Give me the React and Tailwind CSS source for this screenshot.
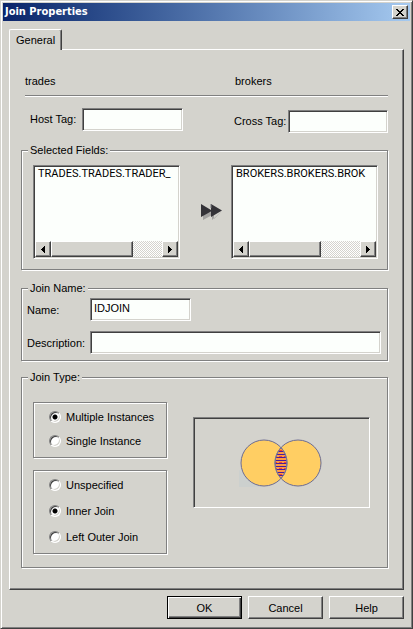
import { useState } from 'react'

const sunken =
  'border border-t-[#808080] border-l-[#808080] border-b-white border-r-white shadow-[inset_1px_1px_0_#404040,inset_-1px_-1px_0_#d4d3cd]'
const raised =
  'border border-t-white border-l-white border-b-[#404040] border-r-[#404040] bg-[#d4d3cd] shadow-[inset_-1px_-1px_0_#808080]'
const etched = 'min-w-0 border border-[#808080] shadow-[1px_1px_0_#fff,inset_1px_1px_0_#fff]'

function TextBox({ id, className = '', ...props }) {
  return (
    <input
      id={id}
      type="text"
      className={`h-[23px] min-w-0 bg-[#fcfffc] px-[3px] pb-1 outline-none ${sunken} ${className}`}
      {...props}
    />
  )
}

function Group({ title, className, children }) {
  return (
    <fieldset className={etched}>
      <legend className="ml-1.5 bg-[#d4d3cd] px-0.5 leading-[13px]">{title}</legend>
      <div className={className}>{children}</div>
    </fieldset>
  )
}

function ScrollButton({ label, d }) {
  return (
    <button type="button" aria-label={label} className={`flex size-4 shrink-0 items-center justify-center ${raised}`}>
      <svg width="4" height="7" viewBox="0 0 4 7" shapeRendering="crispEdges">
        <path d={d} />
      </svg>
    </button>
  )
}

function FieldList({ label, item, thumb }) {
  return (
    <div className={`flex h-[94px] min-w-0 flex-1 flex-col bg-[#fcfffc] p-px ${sunken}`}>
      <ul
        aria-label={label}
        className="flex-1 overflow-hidden pl-[3px] font-[Roboto,'Liberation_Sans',sans-serif] leading-[14px] whitespace-nowrap"
      >
        <li>{item}</li>
      </ul>
      <div className="flex h-4 bg-[repeating-conic-gradient(#fff_0_25%,#d4d3cd_0_50%)] bg-[length:2px_2px]">
        <ScrollButton label={`Scroll ${label} left`} d="M4 0V7H3V6H2V5H1V4H0V3H1V2H2V1H3V0Z" />
        <div className="min-w-0 flex-1">
          <div className={`h-4 ${raised}`} style={{ width: `${thumb}%` }} />
        </div>
        <ScrollButton label={`Scroll ${label} right`} d="M0 0V7H1V6H2V5H3V4H4V3H3V2H2V1H1V0Z" />
      </div>
    </div>
  )
}

function RadioGroup({ name, label, options, value, onChange, className }) {
  return (
    <fieldset aria-label={label} className={etched}>
      <div className={`flex flex-col pt-1.5 pb-2 pl-[15px] ${className}`}>
        {options.map((o) => (
          <label key={o} className="flex h-4 items-center gap-[5px]">
            <input
              type="radio"
              name={name}
              checked={value === o}
              onChange={() => onChange(o)}
              className="size-3 shrink-0 appearance-none rounded-full border border-t-[#808080] border-r-white border-b-white border-l-[#808080] bg-white shadow-[inset_1px_1px_0_#404040,inset_-1px_-1px_0_#d4d3cd] checked:bg-[radial-gradient(circle,#000_2px,#fff_3px)]"
            />
            {o}
          </label>
        ))}
      </div>
    </fieldset>
  )
}

function DoubleArrow() {
  return (
    <svg width="23" height="18" viewBox="0 0 23 18">
      <path d="M3 10L12 9V17L22 8L14 16V11L3 17Z" fill="#a3a2a0" />
      <path d="M1 1L11 7V1L22 7.5L11 14V8.500L1 14Z" fill="#343338" />
      <path d="M11 1V5" stroke="#77767a" />
    </svg>
  )
}

function JoinDiagram() {
  return (
    <svg width="84" height="50" viewBox="0 0 84 50" role="img" aria-label="Inner join">
      <defs>
        <clipPath id="left-circle">
          <circle cx="25" cy="25" r="23" />
        </clipPath>
        <clipPath id="right-circle">
          <circle cx="59" cy="25" r="23" />
        </clipPath>
      </defs>
      <path d="M0 32V49H24Z" fill="#ccd0ce" />
      <circle cx="25" cy="25" r="23" fill="#ffce63" />
      <circle cx="59" cy="25" r="23" fill="#ffce63" />
      <g clipPath="url(#left-circle)">
        <g clipPath="url(#right-circle)">
          <rect x="34" y="8" width="16" height="34" fill="#ff9c42" />
          <path
            d="M35 12.500H49M35 18.500H49M35 24.500H49M35 30.500H49M35 36.500H49"
            stroke="#f5432e"
            strokeDasharray="3 2"
          />
          <path
            d="M35 10.500H49M35 13.500H49M35 16.500H49M35 19.500H49M35 22.500H49M35 25.500H49M35 28.500H49M35 31.500H49M35 34.500H49M35 37.500H49"
            stroke="#4a1c9c"
          />
        </g>
      </g>
      <circle cx="25" cy="25" r="23" fill="none" stroke="#6c6c92" />
      <circle cx="59" cy="25" r="23" fill="none" stroke="#6c6c92" />
      <path d="M42 9.500A23 23 0 0 1 42 40.500A23 23 0 0 1 42 9.500Z" fill="none" stroke="#77779c" />
    </svg>
  )
}

export default function App() {
  const [instances, setInstances] = useState('Multiple Instances')
  const [joinType, setJoinType] = useState('Inner Join')

  return (
    <main className="border border-t-[#d4d3cd] border-r-[#404040] border-b-[#404040] border-l-[#d4d3cd] bg-[#d4d3cd] p-0.5 font-['Liberation_Sans',Arial,sans-serif] text-[11px] leading-4 text-black shadow-[inset_1px_1px_0_#fff,inset_-1px_-1px_0_#808080]">
      <header className="flex h-[18px] items-center justify-between bg-linear-to-r from-[#0a246a] to-[#a6caf0] pr-0.5 pl-0.5">
        <h1 className="font-['DejaVu_Sans_Condensed','DejaVu_Sans',sans-serif] text-[11px] font-bold text-white">
          Join Properties
        </h1>
        <button type="button" aria-label="Close" className={`flex h-3.5 w-4 items-center justify-center ${raised}`}>
          <svg width="8" height="7" viewBox="0 0 8 7" shapeRendering="crispEdges">
            <path d="M0 0H2V1H3V2H5V1H6V0H8V1H7V2H6V3H5V4H6V5H7V6H8V7H6V6H5V5H3V6H2V7H0V6H1V5H2V4H3V3H2V2H1V1H0Z" />
          </svg>
        </button>
      </header>

      <div className="px-1.5 pt-2 pb-[7px]">
        <div role="tablist" className="relative z-10 -mb-px flex">
          <button
            type="button"
            role="tab"
            aria-selected="true"
            className="h-[21px] rounded-t-[2px] border-t border-r border-l border-t-white border-r-[#404040] border-l-white bg-[#d4d3cd] px-1.5 shadow-[inset_-1px_0_0_#808080]"
          >
            General
          </button>
        </div>

        <section className="border border-t-white border-r-[#404040] border-b-[#404040] border-l-white pt-[23px] pr-[15px] pb-[21px] pl-[11px] shadow-[inset_-1px_-1px_0_#808080]">
          <div className="ml-1 flex">
            <span className="flex-1">trades</span>
            <span className="w-[153px]">brokers</span>
          </div>
          <hr className="mt-1.5 ml-1 h-0.5 border-t border-b border-t-[#808080] border-b-white" />

          <div className="mt-[11px] mb-[11px] ml-1 flex">
            <div className="flex flex-1 items-start pl-[5px]">
              <label htmlFor="host-tag" className="w-[52px] leading-[23px]">Host Tag:</label>
              <TextBox id="host-tag" className="w-[101px]" />
            </div>
            <div className="-ml-px flex w-[154px] items-start pt-0.5">
              <label htmlFor="cross-tag" className="w-[54px] leading-[23px]">Cross Tag:</label>
              <TextBox id="cross-tag" className="flex-1" />
            </div>
          </div>

          <Group title="Selected Fields:" className="flex pt-2 pr-[9px] pb-2.5 pl-[11px]">
            <FieldList label="Host fields" item="TRADES.TRADES.TRADER_" thumb={74} />
            <div className="flex w-[51px] shrink-0 items-center justify-end pr-2">
              <DoubleArrow />
            </div>
            <FieldList label="Cross fields" item="BROKERS.BROKERS.BROK" thumb={65} />
          </Group>

          <div className="mt-3">
            <Group title="Join Name:" className="flex flex-col gap-2.5 pt-[3px] pr-1.5 pb-1.5 pl-[5px]">
              <div className="flex items-center">
                <label htmlFor="join-name" className="w-[63px]">Name:</label>
                <TextBox id="join-name" defaultValue="IDJOIN" className="w-[101px]" />
              </div>
              <div className="flex items-center">
                <label htmlFor="join-description" className="w-[63px]">Description:</label>
                <TextBox id="join-description" className="flex-1" />
              </div>
            </Group>
          </div>

          <div className="mt-2.5">
            <Group title="Join Type:" className="flex items-start pt-[18px] pr-[17px] pb-[13px] pl-[11px]">
              <div className="flex w-[134px] flex-col gap-3">
                <RadioGroup
                  name="instances"
                  label="Instances"
                  options={['Multiple Instances', 'Single Instance']}
                  value={instances}
                  onChange={setInstances}
                  className="gap-2"
                />
                <RadioGroup
                  name="join-type"
                  label="Join type"
                  options={['Unspecified', 'Inner Join', 'Left Outer Join']}
                  value={joinType}
                  onChange={setJoinType}
                  className="gap-2.5"
                />
              </div>
              <div className="mt-[15px] ml-[26px] flex h-[91px] flex-1 items-center justify-center border border-t-[#808080] border-r-white border-b-white border-l-[#808080] pr-0.5 shadow-[inset_1px_1px_0_#404040]">
                <JoinDiagram />
              </div>
            </Group>
          </div>
        </section>

        <footer className="mt-1.5 flex justify-end gap-1.5">
          <button
            type="button"
            className="h-[23px] w-[75px] border border-black shadow-[inset_1px_1px_0_#fff,inset_-1px_-1px_0_#404040,inset_-2px_-2px_0_#808080]"
          >
            OK
          </button>
          <button type="button" className={`h-[23px] w-[75px] ${raised}`}>Cancel</button>
          <button type="button" className={`h-[23px] w-[75px] ${raised}`}>Help</button>
        </footer>
      </div>
    </main>
  )
}
